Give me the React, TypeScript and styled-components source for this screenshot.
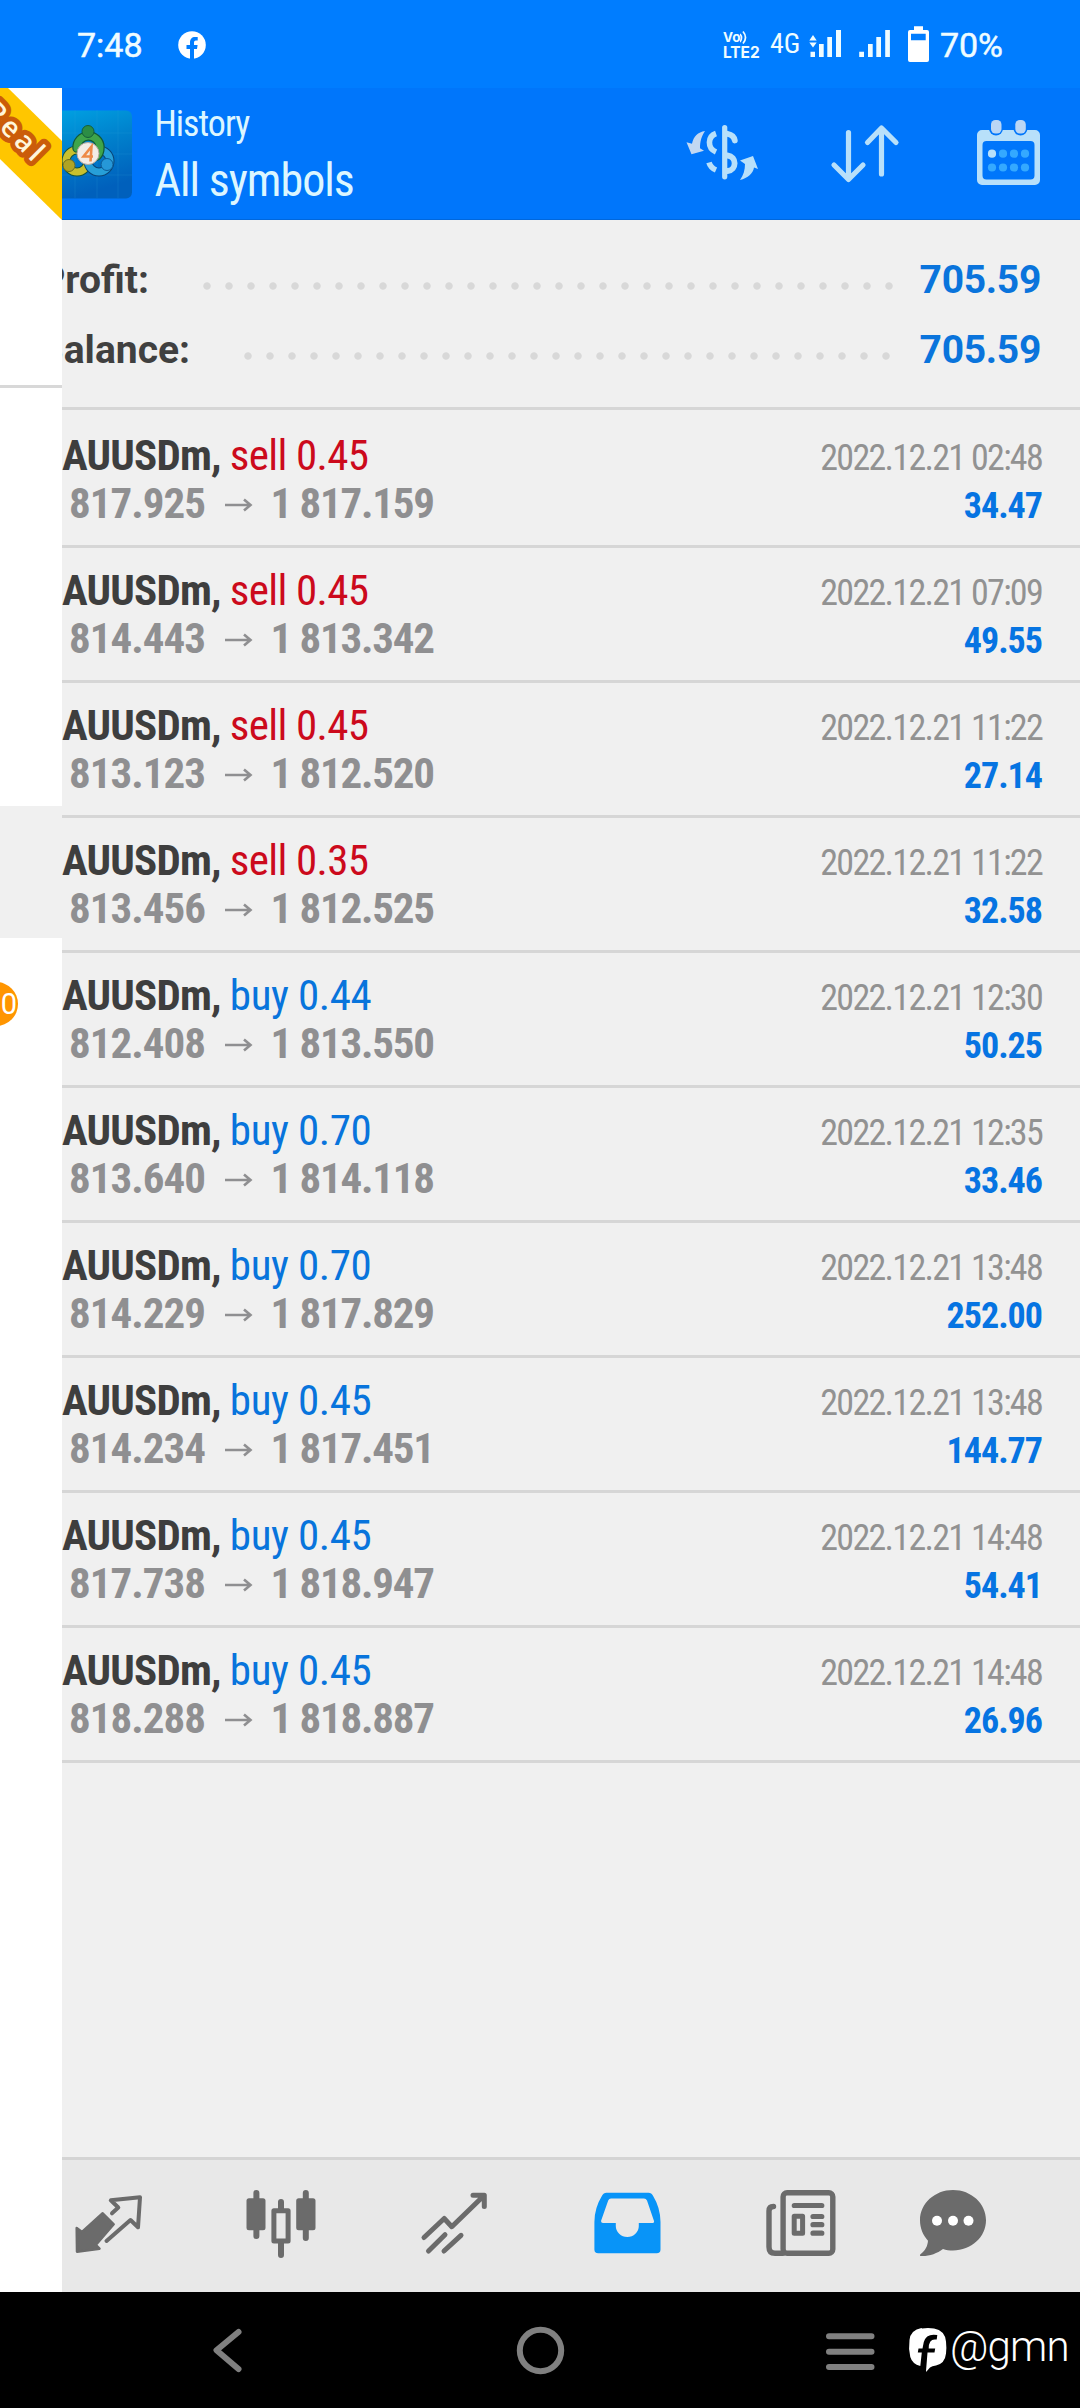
import React from "react";
import styled, { createGlobalStyle, css } from "styled-components";

const condensed = css`
  font-family: "Roboto Condensed", Roboto, "Liberation Sans", sans-serif;
  font-stretch: condensed;
`;

const GlobalStyle = createGlobalStyle`
  body { margin: 0; background: #f0f0f0; font-family: Roboto, "Liberation Sans", sans-serif; }
  * { box-sizing: border-box; }
`;

const Screen = styled.div`
  display: flex;
  flex-direction: column;
  width: 1080px;
  height: 2408px;
  overflow: hidden;
  white-space: nowrap;
`;

/* ---------- status bar ---------- */
const StatusBar = styled.div`
  flex: none;
  display: flex;
  justify-content: space-between;
  height: 88px;
  padding: 0 77px 0 77px;
  background: #007dff;
  color: #effcff;
`;
const StatusGroup = styled.div`
  display: flex;
  align-items: center;
`;
const StatusText = styled.span`
  font-size: 34px;
  font-weight: 400;
  line-height: 40px;
  padding-top: 2px;
  -webkit-text-stroke: 0.5px #effcff;
`;
const FbDot = styled.svg`
  margin-left: 35px;
  margin-top: 1px;
`;
const Volte = styled.div`
  display: flex;
  flex-direction: column;
  width: 38px;
  margin: 1px 9px 0 0;
  font-weight: 700;
  font-size: 15.5px;
  line-height: 15px;
  font-family: Inter, Roboto, sans-serif;
`;
const VolteTop = styled.span`
  display: flex;
  font-size: 13.5px;
`;
const Net = styled.span`
  ${condensed}
  font-size: 28px;
  line-height: 32px;
  width: 39px;
`;
const Battery = styled.svg`
  margin-right: 11px;
`;

/* ---------- shell ---------- */
const Shell = styled.div`
  flex: none;
  display: grid;
  grid-template-columns: 62px 1018px;
  height: 2204px;
`;
const Drawer = styled.aside`
  display: flex;
  flex-direction: column;
  background: #fff;
  overflow: hidden;
`;
const DrawerAccount = styled.div`
  height: 300px;
  border-bottom: 3px solid #d8d8d8;
`;
const DrawerGap = styled.div`
  height: 418px;
`;
const DrawerActive = styled.div`
  height: 132px;
  background: #f0f0f0;
`;
const DrawerItem = styled.div`
  display: flex;
  align-items: center;
  height: 132px;
`;
const Badge = styled.span`
  flex: none;
  display: flex;
  align-items: center;
  justify-content: flex-end;
  width: 44px;
  height: 44px;
  margin-left: -26px;
  padding-right: 1px;
  border-radius: 22px;
  background: #ff9500;
  color: #fff;
  font-size: 29px;
`;

const Main = styled.main`
  display: flex;
  flex-direction: column;
  overflow: hidden;
  background: #f0f0f0;
`;

/* ---------- header ---------- */
const Header = styled.header`
  flex: none;
  display: flex;
  height: 132px;
  background: #0076fb;
  border-bottom: 1.5px solid #0067dc;
  color: #dcf6ff;
`;
const Logo = styled.svg`
  flex: none;
  margin: 22px 0 0 0;
`;
const Titles = styled.div`
  ${condensed}
  display: flex;
  flex-direction: column;
  width: 542px;
  padding: 8px 0 0 22.5px;
  line-height: 56px;
  letter-spacing: -1px;
`;
const Small = styled.span`
  font-size: 36px;
`;
const Large = styled.span`
  font-size: 46px;
`;
const Tools = styled.svg`
  flex: none;
`;

/* ---------- summary ---------- */
const Summary = styled.section`
  flex: none;
  height: 190px;
  padding-top: 25px;
  border-bottom: 3px solid #d6d6d6;
`;
const SumRow = styled.div`
  display: flex;
  align-items: center;
  justify-content: space-between;
  height: 70px;
  padding-right: 39px;
  font-size: 39px;
  font-weight: 700;
`;
const SumLabel = styled.span<{ $w: number }>`
  flex: none;
  display: flex;
  justify-content: flex-end;
  width: ${(p) => p.$w}px;
  color: #404040;
`;
const Leader = styled.span<{ $dots: number; $left: number }>`
  flex: none;
  width: ${(p) => p.$dots * 22}px;
  height: 22px;
  margin: 12px auto 0 ${(p) => p.$left}px;
  background: radial-gradient(circle at 11px 11px, #d8d8d8 3.3px, rgba(216, 216, 216, 0) 4.1px) 0 0 / 22px 22px;
`;
const SumValue = styled.span`
  letter-spacing: -0.3px;
  color: #0a74dc;
`;

/* ---------- deals ---------- */
const Deal = styled.article<{ $first: boolean }>`
  ${condensed}
  flex: none;
  display: flex;
  justify-content: space-between;
  height: ${(p) => (p.$first ? 138 : 135)}px;
  padding: ${(p) => (p.$first ? 21.5 : 18.5)}px 38px 0 0;
  border-bottom: 3px solid #d6d6d6;
`;
const DealCol = styled.div<{ $end?: boolean }>`
  display: flex;
  flex-direction: column;
  align-items: ${(p) => (p.$end ? "flex-end" : "flex-start")};
  padding-top: ${(p) => (p.$end ? 4.5 : 0)}px;
`;
const Symbol = styled.div`
  font-size: 43px;
  line-height: 47.5px;
  font-weight: 700;
  letter-spacing: -0.8px;
  color: #3e3e3e;
`;
const Side = styled.span<{ $buy: boolean }>`
  font-weight: 400;
  letter-spacing: ${(p) => (p.$buy ? -0.4 : -0.65)}px;
  color: ${(p) => (p.$buy ? "#0874dc" : "#cc0a1c")};
`;
const Prices = styled.div`
  display: flex;
  padding-left: 7px;
  font-size: 43px;
  line-height: 48px;
  font-weight: 700;
  letter-spacing: -1px;
  color: #8f8f91;
`;
const ClosePrice = styled.span`
  letter-spacing: -1.25px;
`;
const Arrow = styled.svg`
  margin: 19px 17.5px 0 19px;
`;
const When = styled.div`
  font-size: 36px;
  line-height: 45px;
  letter-spacing: -1.7px;
  color: #929292;
`;
const Gain = styled.div`
  font-size: 36px;
  line-height: 48px;
  margin-top: 0.5px;
  letter-spacing: -1px;
  font-weight: 700;
  color: #0674e2;
`;

const TabBar = styled.nav`
  flex: none;
  height: 135px;
  margin-top: auto;
  background: #e8e8e8;
  border-top: 3px solid #d4d4d4;
`;
const SystemNav = styled.footer`
  flex: none;
  display: flex;
  height: 116px;
  background: #000;
`;
const Handle = styled.span`
  font-size: 42px;
  font-weight: 300;
  letter-spacing: -0.8px;
  color: #fff;
  line-height: 50px;
  margin: 30px 0 0 3px;
`;

const deals = [
  ["sell 0.45", "817.925", "1 817.159", "2022.12.21 02:48", "34.47"],
  ["sell 0.45", "814.443", "1 813.342", "2022.12.21 07:09", "49.55"],
  ["sell 0.45", "813.123", "1 812.520", "2022.12.21 11:22", "27.14"],
  ["sell 0.35", "813.456", "1 812.525", "2022.12.21 11:22", "32.58"],
  ["buy 0.44", "812.408", "1 813.550", "2022.12.21 12:30", "50.25"],
  ["buy 0.70", "813.640", "1 814.118", "2022.12.21 12:35", "33.46"],
  ["buy 0.70", "814.229", "1 817.829", "2022.12.21 13:48", "252.00"],
  ["buy 0.45", "814.234", "1 817.451", "2022.12.21 13:48", "144.77"],
  ["buy 0.45", "817.738", "1 818.947", "2022.12.21 14:48", "54.41"],
  ["buy 0.45", "818.288", "1 818.887", "2022.12.21 14:48", "26.96"],
];

function Ribbon() {
  return (
    <svg width="62" height="133" viewBox="0 88 62 133">
      <path d="M0 88H8L62 141V220L0 159Z" fill="#ffc600" />
      <text
        transform="translate(35.500 165.500) rotate(45)"
        textAnchor="end"
        fontFamily="Open Sans, Noto Sans, sans-serif"
        fontSize="28"
        fontWeight="600"
        letterSpacing="4"
        fill="#fff6dc"
        stroke="#cb5c0a"
        strokeWidth="10"
        strokeLinejoin="round"
        paintOrder="stroke"
      >
        Real
      </text>
    </svg>
  );
}

function AppLogo() {
  return (
    <Logo width="70" height="89" viewBox="62 110 70 89">
      <defs>
        <linearGradient id="lg" x1="0" y1="0" x2="0.3" y2="1">
          <stop offset="0" stopColor="#00a4e4" />
          <stop offset="0.5" stopColor="#0080cc" />
          <stop offset="1" stopColor="#0060bc" />
        </linearGradient>
      </defs>
      <rect x="44" y="110.500" width="88" height="88" rx="6" fill="url(#lg)" />
      <path d="M44 133H132M44 154H132M44 175H132M75 110V198M97 110V198M118 110V198" stroke="#2ba4e4" strokeOpacity=".18" />
      <g fill="none" strokeLinecap="round">
        <circle cx="77" cy="161" r="11" stroke="#14523c" strokeWidth="9" />
        <circle cx="77" cy="161" r="11" stroke="#c8c02e" strokeWidth="7" />
        <circle cx="99" cy="161" r="11" stroke="#0a4476" strokeWidth="9" />
        <circle cx="99" cy="161" r="11" stroke="#279fd8" strokeWidth="7" />
        <path d="M77 148a11.500 11.500 0 1 1 23-1c0 4-1 7-3 9" stroke="#125a38" strokeWidth="9.500" />
        <path d="M77 148a11.500 11.500 0 1 1 23-1c0 4-1 7-3 9" stroke="#3fa54a" strokeWidth="7" />
      </g>
      <circle cx="88" cy="131.500" r="6" fill="#2c8d45" stroke="#155f3a" />
      <circle cx="69" cy="165.500" r="6" fill="#b0a423" stroke="#6c6c20" />
      <circle cx="107" cy="164.500" r="6" fill="#2698d8" stroke="#0d5a96" />
      <circle cx="88" cy="153.500" r="11" fill="#f3ece6" stroke="#b5a89d" />
      <path d="M90.500 161.500L91.500 146.500 83.500 156.500H93" fill="none" stroke="#ee8a48" strokeWidth="2.600" />
    </Logo>
  );
}

function HeaderTools() {
  return (
    <Tools width="372" height="128" viewBox="674 88 372 128" fill="none" stroke="#b8e0fa" strokeLinecap="round" strokeLinejoin="round">
      {/* currency exchange */}
      <path d="M724.700 127.500V176.800" strokeWidth="5.200" />
      <path d="M727.500 133.800c4.500.8 6.800 3.500 7.300 6.700M727.500 155.500c9.500 1 9.500 14.500 0 15.500" strokeWidth="5.800" />
      <path d="M716 133.500c-8.500 3-9 14.500 0 18.500M709 162.500c1 3.500 3.500 6 7 7.500" strokeWidth="5.600" strokeLinecap="butt" />
      <path d="M705 131c-7 1-11.500 5.500-13 12.800l-5.500-1.500 5 12 12.500-3.500-4-2.500c0-7 1.500-12 5-17.300Z" fill="#c2d8f2" stroke="none" />
      <path d="M740 180c8-2 13-6.500 14-12.500l4 1.500-5-13-13 4.500 5 3.500c0 6-1.500 11-5 16Z" fill="#b8e0fa" stroke="none" />
      {/* sort */}
      <path d="M848.500 132.500V178M834 165l14.500 14.500L863 165M881.500 174V129M867.500 142.500l14-14.500 14.500 14.500" strokeWidth="5.200" />
      {/* calendar */}
      <path d="M982 130H1035A5 5 0 0 1 1040 135V180A5 5 0 0 1 1035 185H982A5 5 0 0 1 977 180V135A5 5 0 0 1 982 130ZM986.500 141a4 4 0 0 0-4 4V175.500a4 4 0 0 0 4 4H1030.500a4 4 0 0 0 4-4V145a4 4 0 0 0-4-4Z" fill="#b8e0fa" fillRule="evenodd" stroke="none" />
      <rect x="989" y="118.500" width="14" height="17" rx="7" fill="#0076fb" stroke="none" />
      <rect x="1013.500" y="118.500" width="14" height="17" rx="7" fill="#0076fb" stroke="none" />
      <rect x="991" y="120" width="10.500" height="13.500" rx="4.500" fill="#bad6f5" stroke="none" />
      <rect x="1015.300" y="120" width="10.500" height="13.500" rx="4.500" fill="#bad6f5" stroke="none" />
      {[992, 1003, 1014, 1025].map((x, i) => (
        <g key={x} stroke="none">
          <circle cx={x} cy="153.700" r="4.100" fill={i ? "#34a9ff" : "#b8e0fa"} />
          <circle cx={x} cy="167.500" r="4.100" fill="#34a9ff" />
        </g>
      ))}
    </Tools>
  );
}

function TabIcons() {
  return (
    <svg width="1018" height="132" viewBox="62 2160 1018 132" fill="none" stroke="#6b6b6b" strokeLinecap="round" strokeLinejoin="round">
      {/* quotes */}
      <path d="M76.700 2228L82 2232 102.700 2213.300 113.700 2224.300 95.800 2245 99.500 2248.700 77 2251.700Z" fill="#6b6b6b" strokeWidth="2.500" />
      <path d="M112 2213.300L118.300 2207.500 110.800 2200.300 140 2197.300 138 2227.300 130.500 2220 106.500 2241" strokeWidth="4" />
      {/* chart */}
      <path d="M256.400 2193V2236M305.800 2193V2238M281 2202V2210M281 2242V2255" strokeWidth="6" />
      <rect x="246.500" y="2198.300" width="19" height="32" rx="2.500" fill="#6b6b6b" stroke="none" />
      <rect x="296.200" y="2198.300" width="19.300" height="32" rx="2.500" fill="#6b6b6b" stroke="none" />
      <rect x="273.900" y="2210.800" width="14.200" height="30.300" strokeWidth="5" />
      {/* trade */}
      <path d="M424 2237.500L444.200 2218.500 451.800 2226.700 484 2195.500M473 2195.300H484.300V2206.500M428.500 2251L445 2234.700M444 2251L461 2235.300" strokeWidth="5" />
      {/* history */}
      <path d="M606.500 2192.700H648.500q3 0 4.500 3Q660.500 2208 660.500 2222V2249.500q0 3.800-3.800 3.800H598.200q-3.800 0-3.800-3.800V2222Q594.400 2208 602 2195.700q1.500-3 4.500-3ZM611 2198.500q-2 0-2.800 2L601 2221q0 2 2 2h12.800v3a11.500 11 0 0 0 23 0v-3H652q2.500 0 2-2L647 2200.500q-1-2-3-2Z" fill="#0894f8" fillRule="evenodd" stroke="none" />
      {/* news */}
      <rect x="783.100" y="2192.700" width="49.700" height="60.500" rx="4" strokeWidth="5.400" />
      <path d="M773.500 2206.500q-4.500 0-4.500 4.500V2247q0 6.300 6 6.300H783" strokeWidth="5.400" />
      <path d="M794.300 2205.500H821.800M813 2216.500H821.800M813 2224.700H821.800M813 2233.200H821.800" strokeWidth="5.200" />
      <rect x="794.200" y="2216.300" width="8.400" height="17" strokeWidth="5" />
      {/* messages */}
      <path d="M953 2190c18.300 0 33 13.500 33 30.200s-14.700 30.200-33 30.200c-3.500 0-7-.5-10-1.500-6 4.500-14 7.500-22 7.100-1 0-1.500-1-.5-1.800 5-4 7-8 7.500-13.500-5-5.500-8-12.500-8-20.500 0-16.700 14.700-30.200 33-30.200Z" fill="#6b6b6b" stroke="none" />
      {[937, 953, 968.500].map((x) => (
        <circle key={x} cx={x} cy="2220.700" r="5" fill="#fff" stroke="none" />
      ))}
    </svg>
  );
}

export default function App() {
  return (
    <Screen>
      <GlobalStyle />
      <StatusBar>
        <StatusGroup>
          <StatusText>7:48</StatusText>
          <FbDot width="28" height="28" viewBox="0 0 28 28">
            <circle cx="14" cy="14" r="13.800" fill="#fff" />
            <path d="M12 28V18H8.500V14H12V11.500C12 8 14 6 17 6H19.700V9.500H18C16.300 9.500 16 10.500 16 11.800V14H19.600L19 18H16V28Z" fill="#007dff" />
          </FbDot>
        </StatusGroup>
        <StatusGroup>
          <Volte>
            <VolteTop>
              Vo
              <svg width="9" height="15" viewBox="0 0 9 15" fill="none" stroke="#effcff" strokeWidth="1.700">
                <path d="M0 4q3 3.500 0 8M3 1.500q5 6 0 12" />
              </svg>
            </VolteTop>
            <span>LTE2</span>
          </Volte>
          <Net>4G</Net>
          <svg width="99" height="30" viewBox="810 29 99 30" fill="#effcff">
            <path d="M810.300 40.500L814 35l3.700 5.500ZM810.300 42.500L814 47.500l3.700-5Z" />
            <path d="M811.500 51.700h4.500V57h-4.500ZM820 44h4.700V57H820ZM828.300 37h4.700V57h-4.700ZM837 30h5V57h-5Z" />
            <path d="M860.200 51.700h4.800V57h-4.800ZM869 44h4.700V57H869ZM877.300 37h4.700V57h-4.700ZM886.200 30h4.700V57h-4.700Z" />
          </svg>
          <Battery width="21" height="36" viewBox="909 26 21 36">
            <path d="M915 26.300h9V30h4q2 0 2 2V60q0 2-2 2H911q-2 0-2-2V32q0-2 2-2h4ZM912 33.700V40.300H926.700V33.700Z" fill="#fff" fillRule="evenodd" />
          </Battery>
          <StatusText>70%</StatusText>
        </StatusGroup>
      </StatusBar>

      <Shell>
        <Drawer>
          <DrawerAccount>
            <Ribbon />
          </DrawerAccount>
          <DrawerGap />
          <DrawerActive />
          <DrawerItem>
            <Badge>0</Badge>
          </DrawerItem>
        </Drawer>

        <Main>
          <Header>
            <AppLogo />
            <Titles>
              <Small>History</Small>
              <Large>All symbols</Large>
            </Titles>
            <HeaderTools />
          </Header>
          <Summary>
            <SumRow>
              <SumLabel $w={87}>Profit:</SumLabel>
              <Leader $dots={32} $left={46.6} />
              <SumValue>705.59</SumValue>
            </SumRow>
            <SumRow>
              <SumLabel $w={128}>Balance:</SumLabel>
              <Leader $dots={30} $left={46.6} />
              <SumValue>705.59</SumValue>
            </SumRow>
          </Summary>
          {deals.map(([side, from, to, when, gain], i) => (
            <Deal key={i} $first={i === 0}>
              <DealCol>
                <Symbol>
                  AUUSDm, <Side $buy={side.startsWith("buy")}>{side}</Side>
                </Symbol>
                <Prices>
                  <span>{from}</span>
                  <Arrow width="29" height="14" viewBox="0 0 29 14" fill="none" stroke="#8f8f91" strokeWidth="2.600">
                    <path d="M1 7H26M20 1.500L26.500 7L20 12.500" />
                  </Arrow>
                  <ClosePrice>{to}</ClosePrice>
                </Prices>
              </DealCol>
              <DealCol $end>
                <When>{when}</When>
                <Gain>{gain}</Gain>
              </DealCol>
            </Deal>
          ))}
          <TabBar>
            <TabIcons />
          </TabBar>
        </Main>
      </Shell>

      <SystemNav>
        <svg width="947" height="116" viewBox="0 2292 947 116" fill="none" stroke="#808080" strokeWidth="6" strokeLinecap="round" strokeLinejoin="round">
          <path d="M238.500 2332L216.500 2350.200 238.500 2369M829 2336.200H871.500M829 2351.700H871.500M829 2367H871.500" />
          <circle cx="540.500" cy="2350.500" r="20.700" />
          <path d="M922 2328.500q6-1 12 0 11 2 12 13 .7 6 0 12-1 10-10 12-4 .5-6 2l-3.500 4q-.6.5-.5-.5l1.500-18.500h7l.7-4h-6.500q0-9 6-9h2l.6-4.500q-11-2-13.500 7l-1.300 6.500h-4l-.7 4h4l-1.500 13.500q-8-2-10-9-2-8-.8-17 1-10 12-12Z" fill="#fff" stroke="none" />
        </svg>
        <Handle>@gmn</Handle>
      </SystemNav>
    </Screen>
  );
}
